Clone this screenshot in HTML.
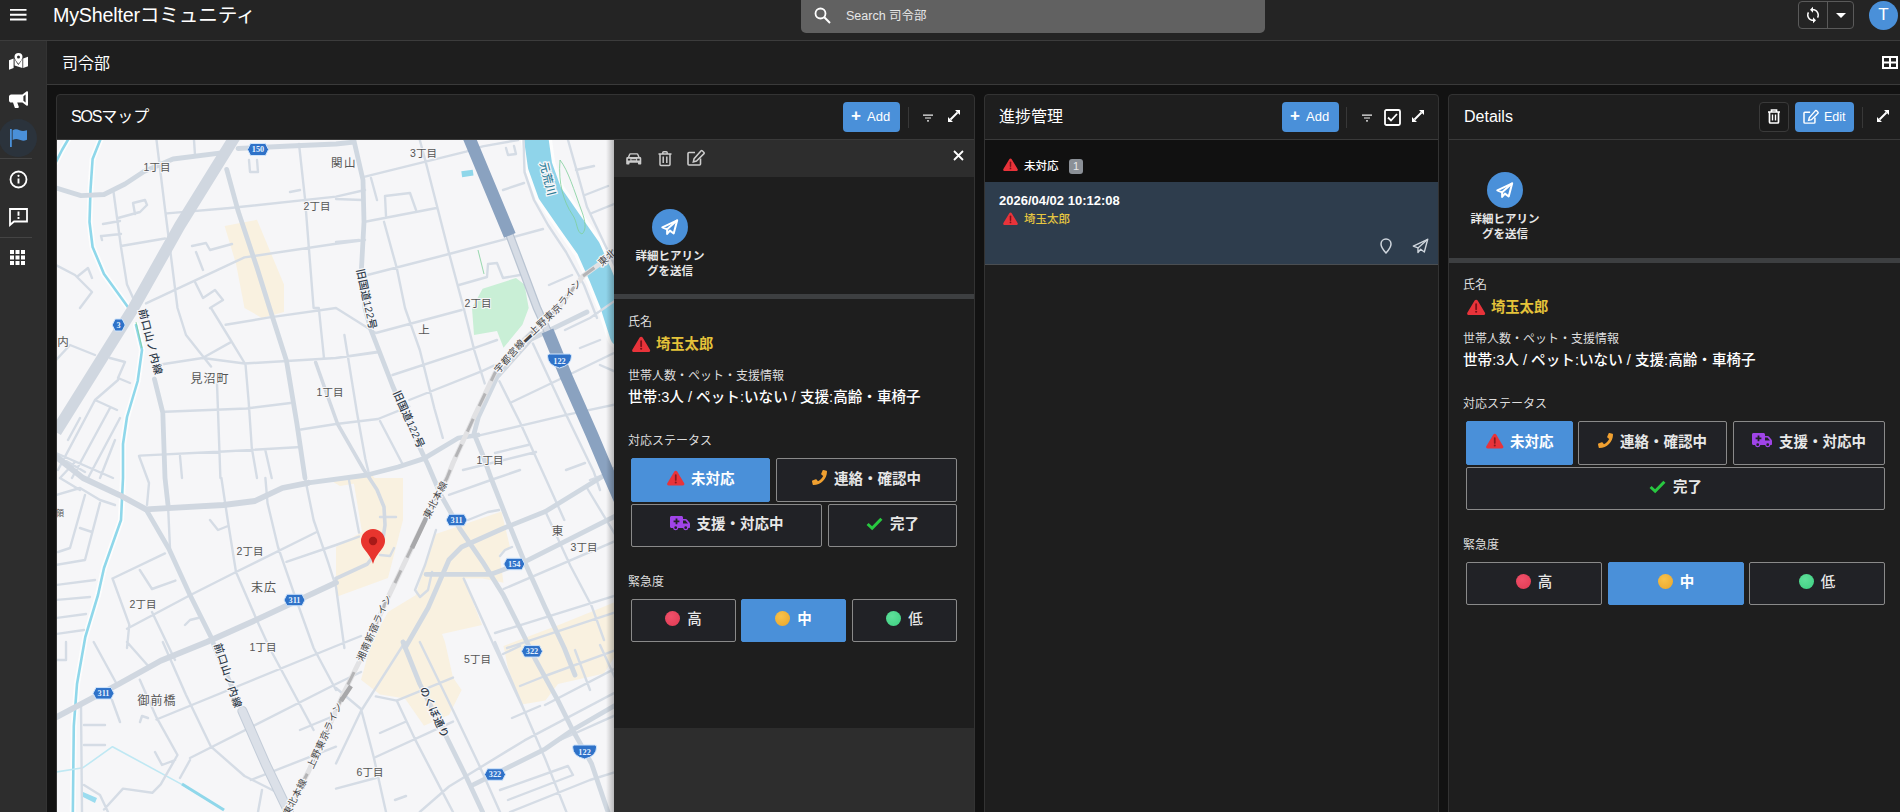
<!DOCTYPE html>
<html lang="ja">
<head>
<meta charset="utf-8">
<title>MyShelterコミュニティ - 司令部</title>
<style>
*{box-sizing:border-box;margin:0;padding:0}
html,body{width:1900px;height:812px;overflow:hidden;background:#121212}
body{font-family:"Liberation Sans","Noto Sans CJK JP",sans-serif;color:#fff;position:relative;font-size:13px}
.abs{position:absolute}
svg{display:block;overflow:visible}
/* top bar */
#topbar{position:absolute;left:0;top:0;width:1900px;height:41px;background:#242424;border-bottom:1px solid #3c3c3c}
#brand{position:absolute;left:53px;top:0;height:30px;line-height:30px;font-size:19.7px;color:#fff;white-space:nowrap;letter-spacing:-0.2px}
#search{position:absolute;left:801px;top:-4px;width:464px;height:36.700px;background:#616161;border-radius:5px}
#search span{position:absolute;left:45px;top:4px;height:32px;line-height:32px;font-size:12.5px;color:#e6e6e6;white-space:nowrap}
#syncgrp{position:absolute;left:1798px;top:1px;width:56px;height:28px;border:1px solid #5a5a5a;border-radius:4px}
#syncgrp i{position:absolute;left:28px;top:0;width:1px;height:26px;background:#5a5a5a}
#avatar{position:absolute;left:1869px;top:0.500px;width:29px;height:29px;border-radius:50%;background:#4a90d9;color:#fff;font-size:17px;line-height:28px;text-align:center}
/* sidebar */
#sidebar{position:absolute;left:0;top:41px;width:47px;height:771px;background:#2d2d2d;border-right:1px solid #333}
#sidebar .sep{position:absolute;left:0;width:32px;height:1px;background:#444}
#sidebar .active{position:absolute;left:-1px;top:78px;width:38px;height:38px;border-radius:50%;background:#2b333c}
/* subheader */
#subhead{position:absolute;left:47px;top:41px;width:1853px;height:44px;background:#1e1e1e;border-bottom:1px solid #3a3a3a}
#subhead h1{position:absolute;left:15px;top:0;height:43px;line-height:45px;font-size:16px;font-weight:400;color:#fff}
/* panels */
.panel{position:absolute;top:94px;height:730px;background:#1e1e1e;border:1px solid #333;border-radius:4px}
.phead{position:absolute;left:0;top:0;right:0;height:45px;border-bottom:1px solid #3a3a3a}
.ptitle{position:absolute;left:14px;top:0;height:44px;line-height:43px;font-size:16px;color:#fff;white-space:nowrap}
.btn{position:absolute;top:7px;height:30px;border-radius:4px;background:#4a90d9;color:#fff;font-size:13px;line-height:30px;white-space:nowrap}
.vdiv{position:absolute;top:12px;width:1px;height:21px;background:#383838}
.lbl{position:absolute;font-size:12px;color:#ddd;white-space:nowrap;line-height:16px}
.val{position:absolute;font-size:14.6px;color:#fff;white-space:nowrap;line-height:22px;font-weight:500}
.name{position:absolute;font-size:14.3px;font-weight:700;color:#e5c33a;white-space:nowrap;line-height:20px}
.sbtn{position:absolute;border-radius:2px;border:1px solid #8a8a8a;background:#212226;color:#e8e8e8;font-size:14.5px;font-weight:700;white-space:nowrap;text-align:center}
.sbtn.on{background:#4a90d9;border-color:#4a90d9;color:#fff}
.sbtn .in{display:inline-flex;align-items:center;height:100%;gap:7px;padding-bottom:5.500px}.sbtn .in svg,.sbtn .in .dot{position:relative;top:0.600px}
.dot{display:inline-block;width:15px;height:15px;border-radius:50%}
.send{position:absolute;width:36px;height:36px;border-radius:50%;background:#4a90d9}
.sendlbl{position:absolute;font-size:11.5px;font-weight:700;color:#e8e8e8;text-align:center;line-height:15px;width:80px}
</style>
</head>
<body>

<!-- ======= TOP BAR ======= -->
<div id="topbar">
  <svg class="abs" style="left:9.500px;top:8px" width="16.500" height="14" viewBox="0 0 16.500 14"><path d="M0 1.900h16.500M0 6.700h16.500M0 11.500h16.500" stroke="#fff" stroke-width="1.900"/></svg>
  <div id="brand">MyShelterコミュニティ</div>
  <div id="search">
    <svg class="abs" style="left:13px;top:11px" width="17" height="17" viewBox="0 0 17 17"><circle cx="6.5" cy="6.5" r="5" fill="none" stroke="#fff" stroke-width="1.8"/><path d="M10.3 10.3L16 16" stroke="#fff" stroke-width="2"/></svg>
    <span>Search 司令部</span>
  </div>
  <div id="syncgrp">
    <svg class="abs" style="left:5px;top:4px" width="18" height="18" viewBox="0 0 24 24"><path fill="#fff" d="M12 4V1L8 5l4 4V6c3.31 0 6 2.69 6 6 0 1.01-.25 1.97-.7 2.8l1.46 1.46C19.54 15.03 20 13.57 20 12c0-4.42-3.58-8-8-8zm0 14c-3.31 0-6-2.69-6-6 0-1.01.25-1.97.7-2.8L5.240 7.740C4.460 8.970 4 10.430 4 12c0 4.420 3.580 8 8 8v3l4-4-4-4v3z"/></svg>
    <i></i>
    <svg class="abs" style="left:37px;top:11px" width="10" height="5" viewBox="0 0 10 5"><path d="M0 0h10L5 5z" fill="#fff"/></svg>
  </div>
  <div id="avatar">T</div>
</div>

<!-- ======= SIDEBAR ======= -->
<div id="sidebar">
  <div class="active"></div>
  <div class="sep" style="top:117px"></div>
  <div class="sep" style="top:196px"></div>
  
  <svg class="abs" style="left:9px;top:12px" width="19" height="17" viewBox="0 0 19 17"><path fill="#fff" d="M0 7.300L4.600 5.500V15L0 16.800zM14.200 5.600L19 3.800V13.200L14.200 15zM5.600 5.600C6.300 8 8 10.200 9.400 12c1.400-1.800 3.100-4 3.800-6.400l.2-.1V15l-7.800-2.400z"/><path fill="#fff" fill-rule="evenodd" d="M9.500 0a4 4 0 0 1 4 4c0 2-2.400 4.800-4 6.800C7.900 8.800 5.500 6 5.500 4a4 4 0 0 1 4-4zm0 2.500a1.500 1.500 0 1 0 0 3 1.500 1.500 0 0 0 0-3z"/></svg>
  <svg class="abs" style="left:9px;top:50px" width="19" height="17" viewBox="0 0 19 17"><path fill="#fff" d="M19 1.200v12.600c0 .8-.9 1.300-1.600.8L13.400 11.600H8.200l1.600 4.200c.2.600-.2 1.200-.9 1.200H6.600c-.4 0-.8-.2-.9-.6L4 11.600H2.200C1 11.600 0 10.600 0 9.400V5.600C0 4.400 1 3.400 2.200 3.400h11.200L17.400.4c.7-.5 1.600 0 1.600.8zM16.600 3.600L14.400 5.300v4.400l2.200 1.700z"/></svg>
  <svg class="abs" style="left:10px;top:88px" width="17" height="18" viewBox="0 0 17 18"><path fill="#4a90d9" d="M0 0h1.800v18H0zM2.600 1.200C5.500-.3 7.500.4 9.500 1.200s4 1.200 7.500 0v9.600c-3.500 1.400-5.500.8-7.500 0s-4-1.300-6.900.2z"/></svg>
  <svg class="abs" style="left:9px;top:129px" width="19" height="19" viewBox="0 0 19 19"><circle cx="9.500" cy="9.500" r="8" fill="none" stroke="#fff" stroke-width="1.800"/><path d="M9.500 8.500v5" stroke="#fff" stroke-width="1.900"/><circle cx="9.500" cy="5.800" r="1.100" fill="#fff"/></svg>
  <svg class="abs" style="left:9px;top:167px" width="19" height="18" viewBox="0 0 19 18"><path d="M1 1h17v12.500H5L1 17z" fill="none" stroke="#fff" stroke-width="1.800" stroke-linejoin="miter"/><path d="M9.500 3.600v4.200M9.500 9v2" stroke="#fff" stroke-width="1.900"/></svg>
  <svg class="abs" style="left:10px;top:209px" width="15" height="15" viewBox="0 0 15 15"><path fill="#fff" d="M0 0h4v4H0zM5.500 0h4v4h-4zM11 0h4v4h-4zM0 5.500h4v4H0zM5.500 5.500h4v4h-4zM11 5.500h4v4h-4zM0 11h4v4H0zM5.500 11h4v4h-4zM11 11h4v4h-4z"/></svg>

</div>

<!-- ======= SUB HEADER ======= -->
<div id="subhead">
  <h1>司令部</h1>
  <svg class="abs" style="left:1835px;top:15px" width="16" height="13" viewBox="0 0 16 13"><path d="M1 1h14v11H1zM8 1v11M1 6.500h14" fill="none" stroke="#fff" stroke-width="2"/></svg>
</div>

<!-- ======= PANEL 1 : SOS MAP ======= -->
<div class="panel" id="p1" style="left:56px;width:919px">
  <div class="phead">
    <div class="ptitle"><span style="letter-spacing:-1.200px">SOS</span>マップ</div>
    <div class="btn" style="left:786px;width:57px"><span style="position:absolute;left:8px;top:-1px;font-size:17px;font-weight:700">+</span><span style="position:absolute;left:24px">Add</span></div>
    <div class="vdiv" style="left:851px"></div>
    <svg class="abs" style="left:866px;top:19px" width="10" height="8" viewBox="0 0 10 8"><path d="M0 1.200h10M2 4h6M4 6.800h2" stroke="#eee" stroke-width="1.200"/></svg><svg class="abs" style="left:891px;top:15px" width="12" height="12" viewBox="0 0 12 12"><path d="M2.500 9.500L9.500 2.500" stroke="#fff" stroke-width="2"/><path d="M7 0h5v5zM0 7v5h5z" fill="#fff"/></svg>
  </div>
  <div id="map" class="abs" style="left:0;top:45px;width:557px;height:672px;background:#f5f5f7;overflow:hidden">
    <svg class="abs" style="left:0;top:0" width="557" height="672" viewBox="57 140 557 672" font-family="Liberation Sans,Noto Sans CJK JP,sans-serif">
<rect x="57" y="140" width="557" height="672" fill="#f6f6f8"/>
<path d="M224.6 226 L257 219.7 L284 284.6 L284 312 L262 318 L244.5 308 L236 263.7Z" fill="#f9f1e0"/>
<path d="M353 478 L403 478 L403 520 L388 578 L336 597 L336 547 L362 532Z" fill="#f9f1e0"/>
<path d="M434.4 534.5 L501.4 511.5 L510 547 L499.4 553.4 L503.5 582.7 L482.6 578.5 L463.7 578.5 L482 625 L442 634 L445 642 L453 677.6 L461.6 690 L449 715 L424 725.8 L405 698.5 L380 694.4 L361 679.7 L371.6 642 L388 612 L415.6 595.3Z" fill="#f9f1e0"/>
<path d="M560 624.6 L616 601.6 L616 654.6 L604 673.4 L558 684 L545.4 700.6 L520.3 704.8 L507.7 667 L503.5 646Z" fill="#f9f1e0"/>
<path d="M330 480 L370 472 L376 480 L340 486Z" fill="#f9f1e0"/>
<path d="M482.6 288.8 L516 278 L524.5 284.6 L528.7 308 L522.4 324.8 L503.5 347.8 L497 331 L474 335 L472 308Z" fill="#c9efd6"/>
<path d="M535.5 133 L536.5 140.8 L540 165.6 L549.8 193 L569 220.8 L588.4 248.3 L600.8 276 L611.9 303.5 L622 335" fill="none" stroke="#fdfdfd" stroke-width="31" stroke-linecap="round" stroke-linejoin="round" />
<path d="M535.5 133 L536.5 140.8 L540 165.6 L549.8 193 L569 220.8 L588.4 248.3 L600.8 276 L611.9 303.5 L622 335" fill="none" stroke="#8fd4ea" stroke-width="24.5" stroke-linecap="round" stroke-linejoin="round" />
<path d="M101 138 L92.6 159 L90.5 190 L89.5 222 L92.6 247 L104 274 L125 303 L130 310 M136 325 L142 350 L137.7 381 L127 417 L123 444 L123 478 L121 520 L104 568 L98 595 L85.3 637 L77 684 L73.8 725.8 L72.8 815 M56 162 L62 150 L69 138" fill="none" stroke="#fdfdfd" stroke-width="6" stroke-linecap="round" stroke-linejoin="round" />
<path d="M101 138 L92.6 159 L90.5 190 L89.5 222 L92.6 247 L104 274 L125 303 L130 310 M136 325 L142 350 L137.7 381 L127 417 L123 444 L123 478 L121 520 L104 568 L98 595 L85.3 637 L77 684 L73.8 725.8 L72.8 815 M56 162 L62 150 L69 138" fill="none" stroke="#8fd7ea" stroke-width="2.6" stroke-linecap="round" stroke-linejoin="round" />
<path d="M56 772 L83 767.7 L112.5 746.7 L181.7 784.4 L223.5 809.5" fill="none" stroke="#bfe8f3" stroke-width="1.6" stroke-linecap="round" stroke-linejoin="round" />
<path d="M182 784l42 26" stroke="#8fd7ea" stroke-width="3" fill="none"/>
<rect x="461.600" y="170.500" width="11.500" height="6" fill="#8fd7ea" transform="rotate(-8 467 173)"/>
<path d="M83 792l14 6-2 5-14-7z" fill="#9bdcef"/>
<path d="M560 160c8 10 14 30 22 52c3 8 5 18 0 22c-6-2-4-12-10-20c-8-12-14-30-12-54z M136 322l6 26 M478 250l6 24" fill="none" stroke="#7fcf9a" stroke-width="0.800"/>
<path d="M139 456 L149 483 L147 505 M56 453 L113 478 M75 462 L60 478 M68 440 L80 418 M156.5 140 L165 209 L177.5 308 L186 335 L211 366.6 M113.6 192.5 L121 247 L127 284.6 L134 300 M121 246 L165 238.5 M167 213.4 L230 208 L336 196.6 L365 190 M146 303.4 L244.5 257.4 L336 243.8 L365 240 M299 144 L305 198.7 L313.6 308 L318.8 308 L324 358 M194 140 L195 155 M118 218 L140 212 L147 205 L145 200 L133 203 L135 214 M103 224 L120 221 M102 236 L121 234 M101 236 L102 240 M56 265 L75 275 L92 292 L80 308 M78 276 L88 268 L92 278 M192 246 L206 243 L210 250 L232 244 M196 252 L203 270 M195 282 L203 298 L215 290 L223 300 L210 308 M249 160 L250 172 L258 172 L257 160 M290 192 L300 190 M365 176.7 L466 151.6 L482.6 146.4 L518 140 M419.8 140 L426 163 L449 253 L463.7 308 L474.2 350 L484.7 383.4 M365 221.8 L436.5 208 M384 221.8 L396.7 267.8 L405 308 L419.8 350 L434.4 408.5 L442.8 437.8 M336 242 L359 240 M367.4 275 L449 254 L503.5 239.6 L543 229 M459 285 L487 277 L488 264 L497 263 L503 278 L520 275 M386 216 L385 196 L410 193 L416 210 M371 178 L377 200 M336 199 L362 200 M523.5 140 L524.5 172 L534 200 L548 225 L566 252 L584 285 L597 318 M568 140 L587 207 L616 268 M503 190 L524 183 M506 148 L508 155 L516 154 L514 146 M576 170 L594 166 M585 195 L608 186 M592 213 L614 204 M549 285 L572 275 M160.7 364.5 L202.6 358 L244.5 363.5 L336 358 L380 352 M225.6 324.8 L269.6 317.4 L336 308 L375.8 333 L461.6 310 M202.6 358 L230 342.6 M211 308 L230 339 L245.5 364.5 L248.7 402 L251.8 448 L257 478 M165 411.7 L246.6 408.5 L290.6 403 M139.8 455.6 L223.5 451.5 L301 447 M217 383.4 L220.4 478 M301 429.5 L336 424 L378 419 L409.3 406.4 M265.4 450.4 L271.7 478 M180 456 L182 478 M56 360 L70 345 L95 355 M110 358 L125 362 L118 378 L130 383 M58 470 L95 400 L118 380 M72 478 L110 408 M88 478 L120 418 M100 478 L115 440 M95 400 L117 410 M56 455 L85 472 M392.5 375 L472 348.8 L497 340 M409.3 400 L482.6 370.8 L495 365 M344.4 335 L357 412.7 L365.3 458.8 L370 478 M336 358 L376 352 M380 421 L403 465 M499.4 381.3 L520.3 423 L545.4 478 L564.3 520 M532.9 343.6 L562.2 406.4 L593.6 471.4 L600 490 M512 402 L556 381 L616 352 M478.4 435.7 L566.4 414.8 L616 404.3 M495 453 L528 445 M463 470 L536 452 M565 330 L590 318 L616 300 M580 348 L600 340 M600 365 L616 372 M566 470 L585 463 M221.4 478 L227.7 520 L236 572 L257 620.4 L269.6 648 L313.6 730 M265.4 478 L267.5 503 L278 547 L294.7 595.3 L313.6 648 L336 690 M305 478 L313.6 520 L328 561.8 L336 587 L344.4 648 M112.5 578.5 L165 553.4 M127 628.8 L190 595.3 L236 572 L315.7 532.5 M112.5 578.5 L129.3 624.6 L127 648 M139.8 570 L152 589 L175.4 580.6 M286.4 561.8 L336 545 L359 536.6 M168 505 L170 548 M210 520 L218 530 L228 526 M185 625 L190 620 L198 618 M152 612 L175 660 M56 495 L80 488 L100 500 L115 505 M60 478 L80 490 M85 495 L70 548 L58 552 M100 503 L85 560 L56 565 M80 528 L92 532 M56 585 L95 580 M56 600 L90 597 M56 618 L86 614 M56 634 L84 630 M348.6 478 L359 532.5 M336 545 L359 536.6 M503.5 589 L616 540.8 M463.7 578.5 L495 648 L524.5 711 M495 633 L616 595.3 M545.4 511.5 L570.5 566 L591.5 605.7 L604 640 M587 488 L616 536 M449 494.8 L491 480 L520 470 M468 520 L488 512 L499 510 M507 648 L616 612 M500 556 L505 550 L512 547 M380 517 L396 517 M380 555 L390 556 L394 548 M436 530 L425 565 L415 590 L420 597 L428 590 L432 572 M590 480 L616 470 M162.8 642 L185.8 694.4 L211 746.7 L244.5 776 L273.8 790.7 M93.7 642 L116.7 684 M127 642 L150 668 M139.8 679.7 L156.5 717.4 L177.5 755 L160.7 784.4 L152.3 792.8 L123 788.6 L104 809.5 M156.5 719.5 L336 646 L361 636 M190 758 L336 684 L361 672 M250.8 780 L336 746.7 M140 722 L142 716 L148 718 M81 705 L82 812 M112 700 L120 722 M84 725 L105 725 M84 745 L105 745 M155 752 L162 765 L175 760 M190 760 L180 778 M262 790 L258 812 M56 660 L66 660 L66 642 M84 785 L100 795 L108 812 M300 730 L336 715 M419.8 642 L453.3 711 L478.4 763.5 L500 812 M495 642 L524.5 711 L545.4 759.3 L566.4 812 M336 688 L361 709 L373.7 757 L386 812 M405 642 L361 711 L336 763.5 M375.8 696.4 L396.7 700.6 L453 677.6 M396.7 700.6 L415.6 740.4 L440.7 788.6 L453 812 M375.8 757 L453 721.6 M419.8 812 L449 786.5 L524.5 740.4 L616 692 M336 788.6 L375.8 778 M503 654 L520 646 M520 686 L545 676 L616 650 M545 705 L616 668 M512 718 L540 706 M500 790 L568 766 L573 775 L508 800 M510 812 L590 780 L616 772 M560 740 L616 715 M575 650 L590 690 M600 645 L616 680 M395 800 L406 796 M380 733 L405 722" fill="none" stroke="#d5dce5" stroke-width="2.4" stroke-linecap="round" stroke-linejoin="round" />
<path d="M336 578.5 L367.4 564 L382 545 L385 525 L384 507 L377 489.7 L363.4 469 L337.6 424 L329 400 L315.7 362.5" fill="none" stroke="#d2d9e2" stroke-width="3.6" stroke-linecap="round" stroke-linejoin="round" />
<path d="M238 148.5 L290 146 L336 144 L354 142 M308.3 482.8 L367 475 L398 467 L423.8 458.6 L458.3 438 L478 435 M56 188 L81 195.6 L104 194.5 L125 184 L144 171.5 L173 159 L223.5 152.7 M226.7 169.4 L238.2 211.3 L257 267.8 L269.6 308 L286.4 360.4 L296.8 423 L305 478 M353.8 140 L363 180 L364 222 L361.5 268 L365 308 L370.6 329 L392.5 385.5 L409.3 425.3 L428 465 L440.7 494.8 L459.6 528.3 L482.6 561.8 L503.5 595.3 L524.5 637 L535 658.8 L558 700.6 L572.6 730 L591.5 763.5 L608 812 M154.4 379 L162.8 412.7 L165 478 L168 505 M146 509.4 L169 549 L190 595 L211 637 L215 648 L242.4 711 M587 312 L530.8 339.4 L497 377 L478.4 417 L474 433.7 L482.6 454.6 L491 478 L509.8 526 L524.5 561.8 L545.4 608 L564.3 648 L575 675 M449 559.7 L461.6 547 L503.5 528.3 L545.4 511.5 L600 478 L616 468 M449 559.7 L428 608 L405 648 L403 642 M403 642 L419.8 684 L445 734 L465.8 776 L482.6 812 M426 574.3 L491 574.3 L524.5 561.8 L616 515.7 M474 784.4 L507.7 767.7 L545.4 748.8 L572.6 730 L616 704.8" fill="none" stroke="#d0d8e1" stroke-width="4.8" stroke-linecap="round" stroke-linejoin="round" />
<path d="M50 452 L83 478 L119 494.8 L146 509.4 L223.5 505 L255 501 L282.4 488 L308.3 482.8 M56 717.4 L118.8 684 L160.7 660.8 L206.8 642 L255 620.4 L336 582.7" fill="none" stroke="#d0d7e0" stroke-width="5.8" stroke-linecap="round" stroke-linejoin="round" />
<path d="M236 135 L179.6 226 L133.5 308 L56 432" fill="none" stroke="#d0d7e0" stroke-width="11.5" stroke-linecap="butt" stroke-linejoin="round" />
<path d="M509.8 235.4 L537 308 L547.5 331" fill="none" stroke="#b9c4d2" stroke-width="8.5" stroke-linecap="round" stroke-linejoin="round" />
<path d="M509.8 235.4 L537 308 L547.5 331" fill="none" stroke="#d6dce5" stroke-width="6" stroke-linecap="round" stroke-linejoin="round" />
<path d="M242.4 711 L265.4 763.5 L284.3 803 L290 815" fill="none" stroke="#c3ccd8" stroke-width="10" stroke-linecap="round" stroke-linejoin="round" />
<path d="M242.4 711 L265.4 763.5 L284.3 803 L290 815" fill="none" stroke="#dbe0e8" stroke-width="8" stroke-linecap="round" stroke-linejoin="round" />
<path d="M468 135 L509.8 235.4 M547.5 331 L566.4 377 L591.5 433.7 L610.3 478 L620 500" fill="none" stroke="#8aa2c0" stroke-width="12.5" stroke-linecap="butt" stroke-linejoin="round" />
<path d="M616 250 L600 263.7 L583 276 L558 308 L524.5 339.4 L495 373 L474 417 L453 463 L447 478 L426 517.8 L405 561.8 L386 601.6 L365.3 648 L359.6 661 L344.7 691 L326 733 L308.7 771 L285 817" fill="none" stroke="#e2e2e4" stroke-width="5" stroke-linecap="round" stroke-linejoin="round" />
<path d="M616 250 L600 263.7 L583 276 L558 308 L524.5 339.4 L495 373 L474 417 L453 463 L447 478 L426 517.8 L405 561.8 L386 601.6 L365.3 648 L359.6 661 L344.7 691 L326 733 L308.7 771 L285 817" fill="none" stroke="#b4b4b6" stroke-width="3" stroke-linecap="butt" stroke-linejoin="round" stroke-dasharray="14 14"/>
<path d="M430 510L412 548M351 686L341 701" stroke="#a8a8aa" stroke-width="4.500" fill="none"/>
<path d="M250.5 143.5H265.5L268.5 149.5L265.5 155.5H250.5L247.5 149.5Z" fill="#2f72c8" stroke="#cfe4fb" stroke-width="1"/><text x="258" y="152.4" text-anchor="middle" font-size="8.3" font-weight="700" fill="#e4f0ff" font-family="Liberation Serif,serif">150</text>
<path d="M115.2 319H122.2L125.2 325L122.2 331H115.2L112.2 325Z" fill="#2f72c8" stroke="#cfe4fb" stroke-width="1"/><text x="118.7" y="327.9" text-anchor="middle" font-size="8.3" font-weight="700" fill="#e4f0ff" font-family="Liberation Serif,serif">3</text>
<path d="M449.1 514.25H464.1L467.1 520L464.1 525.75H449.1L446.1 520Z" fill="#2f72c8" stroke="#cfe4fb" stroke-width="1"/><text x="456.6" y="522.9" text-anchor="middle" font-size="8.3" font-weight="700" fill="#e4f0ff" font-family="Liberation Serif,serif">311</text>
<path d="M506.8 558.25H521.8L524.8 564L521.8 569.75H506.8L503.8 564Z" fill="#2f72c8" stroke="#cfe4fb" stroke-width="1"/><text x="514.3" y="566.9" text-anchor="middle" font-size="8.3" font-weight="700" fill="#e4f0ff" font-family="Liberation Serif,serif">154</text>
<path d="M287 594.25H302L305 600L302 605.75H287L284 600Z" fill="#2f72c8" stroke="#cfe4fb" stroke-width="1"/><text x="294.5" y="602.9" text-anchor="middle" font-size="8.3" font-weight="700" fill="#e4f0ff" font-family="Liberation Serif,serif">311</text>
<path d="M96 687.55H111L114 693.3L111 699.05H96L93 693.3Z" fill="#2f72c8" stroke="#cfe4fb" stroke-width="1"/><text x="103.5" y="696.2" text-anchor="middle" font-size="8.3" font-weight="700" fill="#e4f0ff" font-family="Liberation Serif,serif">311</text>
<path d="M524.5 645.55H539.5L542.5 651.3L539.5 657.05H524.5L521.5 651.3Z" fill="#2f72c8" stroke="#cfe4fb" stroke-width="1"/><text x="532" y="654.2" text-anchor="middle" font-size="8.3" font-weight="700" fill="#e4f0ff" font-family="Liberation Serif,serif">322</text>
<path d="M487.5 768.75H502.5L505.5 774.5L502.5 780.25H487.5L484.5 774.5Z" fill="#2f72c8" stroke="#cfe4fb" stroke-width="1"/><text x="495" y="777.4" text-anchor="middle" font-size="8.3" font-weight="700" fill="#e4f0ff" font-family="Liberation Serif,serif">322</text>
<path d="M547.5 356Q547.5 354 549.5 354H569.5Q571.5 354 571.5 356Q571.5 365.2 559.5 368Q547.5 365.2 547.5 356Z" fill="#2f72c8" stroke="#cfe4fb" stroke-width="1"/><text x="559.5" y="363.6" text-anchor="middle" font-size="8.3" font-weight="700" fill="#e4f0ff" font-family="Liberation Serif,serif">122</text>
<path d="M572.6 747Q572.6 745 574.6 745H594.6Q596.6 745 596.6 747Q596.6 756.2 584.6 759Q572.6 756.2 572.6 747Z" fill="#2f72c8" stroke="#cfe4fb" stroke-width="1"/><text x="584.6" y="754.6" text-anchor="middle" font-size="8.3" font-weight="700" fill="#e4f0ff" font-family="Liberation Serif,serif">122</text>
<text x="157" y="171" text-anchor="middle" font-size="10.5" fill="#555" font-weight="400" letter-spacing="0" stroke="#f6f6f8" stroke-width="2" paint-order="stroke">1丁目</text>
<text x="344" y="167" text-anchor="middle" font-size="11.5" fill="#555" font-weight="400" letter-spacing="1.5" stroke="#f6f6f8" stroke-width="2" paint-order="stroke">関山</text>
<text x="317" y="210" text-anchor="middle" font-size="10.5" fill="#555" font-weight="400" letter-spacing="0" stroke="#f6f6f8" stroke-width="2" paint-order="stroke">2丁目</text>
<text x="423.5" y="157" text-anchor="middle" font-size="10.5" fill="#555" font-weight="400" letter-spacing="0" stroke="#f6f6f8" stroke-width="2" paint-order="stroke">3丁目</text>
<text x="478" y="307" text-anchor="middle" font-size="10.5" fill="#555" font-weight="400" letter-spacing="0" stroke="#f6f6f8" stroke-width="2" paint-order="stroke">2丁目</text>
<text x="424" y="334" text-anchor="middle" font-size="11.5" fill="#555" font-weight="400" letter-spacing="0" stroke="#f6f6f8" stroke-width="2" paint-order="stroke">上</text>
<text x="210" y="383" text-anchor="middle" font-size="12" fill="#555" font-weight="400" letter-spacing="1" stroke="#f6f6f8" stroke-width="2" paint-order="stroke">見沼町</text>
<text x="63" y="346" text-anchor="middle" font-size="11.5" fill="#555" font-weight="400" letter-spacing="0" stroke="#f6f6f8" stroke-width="2" paint-order="stroke">内</text>
<text x="330" y="396" text-anchor="middle" font-size="10.5" fill="#555" font-weight="400" letter-spacing="0" stroke="#f6f6f8" stroke-width="2" paint-order="stroke">1丁目</text>
<text x="490" y="464" text-anchor="middle" font-size="10.5" fill="#555" font-weight="400" letter-spacing="0" stroke="#f6f6f8" stroke-width="2" paint-order="stroke">1丁目</text>
<text x="250" y="555" text-anchor="middle" font-size="10.5" fill="#555" font-weight="400" letter-spacing="0" stroke="#f6f6f8" stroke-width="2" paint-order="stroke">2丁目</text>
<text x="143" y="608" text-anchor="middle" font-size="10.5" fill="#555" font-weight="400" letter-spacing="0" stroke="#f6f6f8" stroke-width="2" paint-order="stroke">2丁目</text>
<text x="264" y="592" text-anchor="middle" font-size="12" fill="#555" font-weight="400" letter-spacing="1" stroke="#f6f6f8" stroke-width="2" paint-order="stroke">末広</text>
<text x="557.5" y="535" text-anchor="middle" font-size="11.5" fill="#555" font-weight="400" letter-spacing="0" stroke="#f6f6f8" stroke-width="2" paint-order="stroke">東</text>
<text x="584" y="551" text-anchor="middle" font-size="10.5" fill="#555" font-weight="400" letter-spacing="0" stroke="#f6f6f8" stroke-width="2" paint-order="stroke">3丁目</text>
<text x="263" y="651" text-anchor="middle" font-size="10.5" fill="#555" font-weight="400" letter-spacing="0" stroke="#f6f6f8" stroke-width="2" paint-order="stroke">1丁目</text>
<text x="157" y="705" text-anchor="middle" font-size="12" fill="#555" font-weight="400" letter-spacing="1" stroke="#f6f6f8" stroke-width="2" paint-order="stroke">御前橋</text>
<text x="477.5" y="662.5" text-anchor="middle" font-size="10.5" fill="#555" font-weight="400" letter-spacing="0" stroke="#f6f6f8" stroke-width="2" paint-order="stroke">5丁目</text>
<text x="370" y="775.5" text-anchor="middle" font-size="10.5" fill="#555" font-weight="400" letter-spacing="0" stroke="#f6f6f8" stroke-width="2" paint-order="stroke">6丁目</text>
<text x="60" y="516" text-anchor="middle" font-size="8" fill="#555" font-weight="400" letter-spacing="0" stroke="#f6f6f8" stroke-width="2" paint-order="stroke">領</text>
<text x="61" y="341" text-anchor="middle" font-size="8" fill="#555" font-weight="400" letter-spacing="0" stroke="#f6f6f8" stroke-width="2" paint-order="stroke"></text>
<text transform="translate(147 343) rotate(76)" text-anchor="middle" font-size="10.5" fill="#2e3a4a" font-weight="500" letter-spacing="0.8" stroke="#f6f6f8" stroke-width="2.500" paint-order="stroke">前口山ノ内線</text>
<text transform="translate(544 180) rotate(76)" text-anchor="middle" font-size="11" fill="#2f7f9a" font-weight="500" letter-spacing="0.5" stroke="#f6f6f8" stroke-width="2.500" paint-order="stroke">元荒川</text>
<text transform="translate(363 300) rotate(78)" text-anchor="middle" font-size="10.5" fill="#2e3a4a" font-weight="500" letter-spacing="0.3" stroke="#f6f6f8" stroke-width="2.500" paint-order="stroke">旧国道122号</text>
<text transform="translate(405.5 421) rotate(66)" text-anchor="middle" font-size="10.5" fill="#2e3a4a" font-weight="500" letter-spacing="0.3" stroke="#f6f6f8" stroke-width="2.500" paint-order="stroke">旧国道122号</text>
<path id="railrev" d="M285 817 L308.7 771 L326 733 L344.7 691 L359.6 661 L365.3 648 L386 601.6 L405 561.8 L426 517.8 L447 478 L453 463 L474 417 L495 373 L524.5 339.4 L558 308 L583 276 L600 263.7 L616 250" fill="none"/>
<text font-size="9.6" fill="#444" letter-spacing="0.7" stroke="#f6f6f8" stroke-width="2.400" paint-order="stroke" text-anchor="middle" dy="3.200"><textPath href="#railrev" startOffset="555.0">宇都宮線▬上野東京ライン</textPath></text>
<text font-size="9.6" fill="#444" letter-spacing="0.5" stroke="#f6f6f8" stroke-width="2.400" paint-order="stroke" text-anchor="middle" dy="3.200"><textPath href="#railrev" startOffset="653.2">東北</textPath></text>
<text font-size="9.6" fill="#444" letter-spacing="0.5" stroke="#f6f6f8" stroke-width="2.400" paint-order="stroke" text-anchor="middle" dy="3.200"><textPath href="#railrev" startOffset="351.2">東北本線</textPath></text>
<text font-size="9.6" fill="#444" letter-spacing="0.6" stroke="#f6f6f8" stroke-width="2.400" paint-order="stroke" text-anchor="middle" dy="3.200"><textPath href="#railrev" startOffset="209.0">湘南新宿ライン</textPath></text>
<text font-size="9.6" fill="#444" letter-spacing="0.6" stroke="#f6f6f8" stroke-width="2.400" paint-order="stroke" text-anchor="middle" dy="3.200"><textPath href="#railrev" startOffset="90.8">上野東京ライン</textPath></text>
<text font-size="9.6" fill="#444" letter-spacing="0.5" stroke="#f6f6f8" stroke-width="2.400" paint-order="stroke" text-anchor="middle" dy="3.200"><textPath href="#railrev" startOffset="22.1">東北本線</textPath></text>
<text transform="translate(224.5 677) rotate(72)" text-anchor="middle" font-size="10.5" fill="#2e3a4a" font-weight="500" letter-spacing="0.8" stroke="#f6f6f8" stroke-width="2.500" paint-order="stroke">前口山ノ内線</text>
<text transform="translate(431 714) rotate(65)" text-anchor="middle" font-size="10.5" fill="#2e3a4a" font-weight="500" letter-spacing="0.5" stroke="#f6f6f8" stroke-width="2.500" paint-order="stroke">のくぼ通り</text>
<path d="M373 564c-1.500-6-5-10-8.500-14.500c-2.500-3.200-3.500-6-3.500-8.500a12 12 0 0 1 24 0c0 2.500-1 5.300-3.500 8.500c-3.500 4.500-7 8.500-8.500 14.500z" fill="#e8352e"/><circle cx="373" cy="541" r="4.200" fill="#a81a18"/>
<defs><linearGradient id="edg" x1="0" x2="1"><stop offset="0" stop-color="#000" stop-opacity="0"/><stop offset="1" stop-color="#000" stop-opacity="0.25"/></linearGradient></defs><rect x="606" y="140" width="8" height="672" fill="url(#edg)"/>
</svg>
  </div>
  <div id="side" class="abs" style="left:557px;top:45px;width:360px;height:672px;background:#2d2d2d">
    <div class="abs" style="left:0;top:0;width:360px;height:37px;background:#2d2d2d"></div>
    <div class="abs" style="left:0;top:37px;width:360px;height:117px;background:#1e1e1e"></div>
    <div class="abs" style="left:0;top:154px;width:360px;height:5px;background:#3d3f41"></div>
    <div class="abs" style="left:0;top:159px;width:360px;height:429px;background:#1e1e1e"></div>
    <svg class="abs" style="left:12px;top:13px" width="15.500" height="11.500" viewBox="0 0 15 11"><path d="M2.300 4.600L3.500 1.400Q3.700.8 4.400.8H10.600Q11.300.8 11.500 1.400L12.700 4.600" fill="none" stroke="#ccc" stroke-width="1.400"/><path fill="#ccc" fill-rule="evenodd" d="M1.500 3.900H13.500Q14.800 3.900 14.800 5.200V10.300Q14.800 11 14.100 11H12.300Q11.600 11 11.600 10.300V9.400H3.400V10.300Q3.400 11 2.700 11H.9Q.2 11 .2 10.300V5.200Q.2 3.900 1.500 3.900ZM1.800 5.600V7.200H4.200V5.600ZM10.800 5.600V7.200H13.200V5.600ZM5.200 5.900V6.900H9.800V5.900Z"/></svg><svg class="abs" style="left:44px;top:11px" width="14" height="15" viewBox="0 0 14 15"><path d="M0.500 3h13M4.800 3V1.700Q4.800.8 5.700.8H8.300Q9.200.8 9.200 1.700V3M2 3v10.500c0 .5.400 1 1 1h8c.6 0 1-.5 1-1V3M5.200 5.500v6.500M8.800 5.500v6.500" fill="none" stroke="#ccc" stroke-width="1.500"/></svg><svg class="abs" style="left:73px;top:10px" width="18" height="16" viewBox="0 0 18 16"><path d="M8 2.500H2c-.6 0-1 .4-1 1V14c0 .6.400 1 1 1h10.500c.6 0 1-.4 1-1V8.500" fill="none" stroke="#ccc" stroke-width="1.600"/><path d="M15.200.7l1.800 1.800c.3.300.3.800 0 1.100L9.500 11.100 6.300 11.900l.8-3.200L14.100.7c.3-.3.800-.3 1.100 0z" fill="none" stroke="#ccc" stroke-width="1.500"/></svg><svg class="abs" style="left:339px;top:10px" width="11" height="11" viewBox="0 0 11 11"><path d="M1 1l9 9M10 1l-9 9" stroke="#fff" stroke-width="1.800"/></svg><div class="send" style="left:38px;top:69px"></div><svg class="abs" style="left:47px;top:79px" width="17.500" height="17.500" viewBox="0 0 20 20"><path d="M18.500 1.500L1.500 9.500l5.500 2.200v5.300l3.200-3.700 4.300 3.200z" fill="none" stroke="#fff" stroke-width="2.300" stroke-linejoin="round"/><path d="M18.500 1.500L7 11.700" fill="none" stroke="#fff" stroke-width="2.300"/></svg><div class="sendlbl" style="left:16px;top:109px">詳細ヒアリン<br>グを送信</div><div class="lbl" style="left:14px;top:174px">氏名</div><svg class="abs" style="left:18px;top:195.500px" width="18.300" height="16" viewBox="0 0 17 15" preserveAspectRatio="none"><path d="M8.500 0.600c.6 0 1.100.3 1.400.8l6.800 11.400c.6 1-.1 2.200-1.400 2.200H1.700C.4 15-.3 13.800.3 12.800L7.100 1.400C7.400.9 7.900.6 8.500.6z" fill="#e8333a"/><path d="M8.500 4.800v4.700" stroke="#7a1218" stroke-width="1.700" stroke-linecap="round"/><circle cx="8.500" cy="12" r="1" fill="#7a1218"/></svg><div class="name" style="left:42px;top:194px">埼玉太郎</div><div class="lbl" style="left:14px;top:228px">世帯人数・ペット・支援情報</div><div class="val" style="left:14px;top:246px">世帯:3人 / ペット:いない / 支援:高齢・車椅子</div><div class="lbl" style="left:14px;top:293px">対応ステータス</div><div class="sbtn on" style="left:17px;top:318px;width:139px;height:44px"><span class="in"><svg width="17.500" height="15.800" viewBox="0 0 17 15"><path d="M8.500 0.600c.6 0 1.100.3 1.400.8l6.800 11.400c.6 1-.1 2.200-1.400 2.200H1.700C.4 15-.3 13.800.3 12.800L7.100 1.400C7.400.9 7.900.6 8.500.6z" fill="#e8333a"/><path d="M8.500 4.800v4.700" stroke="#8a1a20" stroke-width="1.700" stroke-linecap="round"/><circle cx="8.500" cy="12" r="1" fill="#8a1a20"/></svg>未対応</span></div><div class="sbtn" style="left:162px;top:318px;width:181px;height:44px"><span class="in"><svg width="15" height="15" viewBox="0 0 512 512"><path fill="#f0a030" d="M493.400 24.600l-104-24c-11.300-2.600-22.900 3.300-27.500 13.900l-48 112c-4.200 9.800-1.400 21.300 6.900 28l60.600 49.600c-36 76.700-98.900 140.500-177.200 177.200l-49.600-60.600c-6.800-8.300-18.200-11.100-28-6.900l-112 48C3.900 366.500-2 378.100.6 389.400l24 104C27.100 504.200 36.700 512 48 512c256.100 0 464-207.500 464-464 0-11.200-7.700-20.900-18.600-23.400z"/></svg>連絡・確認中</span></div><div class="sbtn" style="left:17px;top:364px;width:191px;height:43px"><span class="in"><svg width="20" height="15" viewBox="0 0 20 15"><path fill="#a044e8" d="M1.500 0h10c.8 0 1.500.7 1.500 1.500V3h2.600c.5 0 1 .2 1.300.6l2.500 2.900c.4.400.6.900.6 1.400V11c0 .6-.4 1-1 1h-.6a2.700 2.700 0 0 1-5.300 0H8.300A2.700 2.700 0 0 1 3 12h-1.500C.7 12 0 11.300 0 10.500v-9C0 .7.700 0 1.500 0zM13 4.500v3h5l-2.300-2.700c-.1-.2-.3-.3-.5-.3zM5.700 10.300a1.400 1.400 0 1 0 0 2.800 1.400 1.400 0 0 0 0-2.800zm10 0a1.400 1.400 0 1 0 0 2.800 1.400 1.400 0 0 0 0-2.800zM5.600 2.400v2H3.600v1.800h2v2h1.800v-2h2V4.400h-2v-2z" fill-rule="evenodd"/></svg>支援・対応中</span></div><div class="sbtn" style="left:214px;top:364px;width:129px;height:43px"><span class="in"><svg width="17" height="13" viewBox="0 0 16 13" preserveAspectRatio="none"><path d="M1.500 7l4.300 4.200L14.500 1.800" fill="none" stroke="#28c840" stroke-width="2.800"/></svg>完了</span></div><div class="lbl" style="left:14px;top:434px">緊急度</div><div class="sbtn" style="left:17px;top:459px;width:105px;height:43px"><span class="in"><span class="dot" style="background:radial-gradient(circle at 40% 35%,#f0506a,#e03a52)"></span><span style="font-weight:500">高</span></span></div><div class="sbtn on" style="left:127px;top:459px;width:105px;height:43px"><span class="in"><span class="dot" style="background:radial-gradient(circle at 40% 35%,#f8c24a,#eaa52a)"></span>中</span></div><div class="sbtn" style="left:238px;top:459px;width:105px;height:43px"><span class="in"><span class="dot" style="background:radial-gradient(circle at 40% 35%,#5fe09a,#3ccf80)"></span><span style="font-weight:500">低</span></span></div>
  </div>
</div>

<!-- ======= PANEL 2 : PROGRESS ======= -->
<div class="panel" id="p2" style="left:984px;width:455px">
  <div class="phead">
    <div class="ptitle">進捗管理</div>
    <div class="btn" style="left:297px;width:57px"><span style="position:absolute;left:8px;top:-1px;font-size:17px;font-weight:700">+</span><span style="position:absolute;left:24px">Add</span></div>
    <div class="vdiv" style="left:361px"></div>
    <svg class="abs" style="left:377px;top:19px" width="10" height="8" viewBox="0 0 10 8"><path d="M0 1.200h10M2 4h6M4 6.800h2" stroke="#eee" stroke-width="1.200"/></svg><svg class="abs" style="left:399px;top:14px" width="17" height="17" viewBox="0 0 17 17"><rect x="1" y="1" width="15" height="15" rx="1.500" fill="none" stroke="#fff" stroke-width="1.800"/><path d="M4 8.500l3 3 6-6.500" fill="none" stroke="#fff" stroke-width="1.800"/></svg><svg class="abs" style="left:427px;top:15px" width="12" height="12" viewBox="0 0 12 12"><path d="M2.500 9.500L9.500 2.500" stroke="#fff" stroke-width="2"/><path d="M7 0h5v5zM0 7v5h5z" fill="#fff"/></svg>
  </div>
  <div class="abs" style="left:0;top:45px;width:453px;height:43px;background:#111"></div>
  <div class="abs" style="left:0;top:87px;width:453px;height:83px;background:#2e3d4d;border-bottom:1px solid #4a4e52"></div>
  <svg class="abs" style="left:18px;top:63px" width="15" height="13" viewBox="0 0 17 15"><path d="M8.500 0.600c.6 0 1.100.3 1.400.8l6.800 11.400c.6 1-.1 2.200-1.400 2.200H1.700C.4 15-.3 13.800.3 12.800L7.100 1.400C7.400.9 7.900.6 8.500.6z" fill="#e8333a"/><path d="M8.500 4.800v4.700" stroke="#7a1218" stroke-width="1.700" stroke-linecap="round"/><circle cx="8.500" cy="12" r="1" fill="#7a1218"/></svg><div class="abs" style="left:39px;top:63px;font-size:11.500px;font-weight:500;line-height:16px;color:#fff">未対応</div><div class="abs" style="left:84px;top:64px;width:14px;height:15px;border-radius:3px;background:#8b9097;color:#e8e8e8;font-size:11px;line-height:15px;text-align:center">1</div><div class="abs" style="left:14px;top:98px;font-size:13px;font-weight:700;line-height:16px;color:#fff;white-space:nowrap">2026/04/02 10:12:08</div><svg class="abs" style="left:18px;top:117px" width="15" height="13" viewBox="0 0 17 15"><path d="M8.500 0.600c.6 0 1.100.3 1.400.8l6.800 11.400c.6 1-.1 2.200-1.400 2.200H1.700C.4 15-.3 13.800.3 12.800L7.100 1.400C7.400.9 7.900.6 8.500.6z" fill="#e8333a"/><path d="M8.500 4.800v4.700" stroke="#7a1218" stroke-width="1.700" stroke-linecap="round"/><circle cx="8.500" cy="12" r="1" fill="#7a1218"/></svg><div class="abs" style="left:39px;top:116px;font-size:11.500px;font-weight:500;line-height:16px;color:#e6c640;white-space:nowrap">埼玉太郎</div><svg class="abs" style="left:395px;top:143px" width="12" height="16" viewBox="0 0 12 16"><path d="M6 1C3.200 1 1 3.200 1 6c0 3.500 5 9 5 9s5-5.500 5-9c0-2.800-2.200-5-5-5z" fill="none" stroke="#cfd6dd" stroke-width="1.500"/></svg><svg class="abs" style="left:427px;top:143px" width="17" height="17" viewBox="0 0 20 20"><path d="M18.500 1.500L1.500 9.500l5.500 2.200v5.300l3.200-3.700 4.300 3.200z" fill="none" stroke="#cfd6dd" stroke-width="1.6" stroke-linejoin="round"/><path d="M18.500 1.500L7 11.700" fill="none" stroke="#cfd6dd" stroke-width="1.6"/></svg>
</div>

<!-- ======= PANEL 3 : DETAILS ======= -->
<div class="panel" id="p3" style="left:1448px;width:470px">
  <div class="phead">
    <div class="ptitle" style="left:15px">Details</div>
    <div class="abs" style="left:310px;top:7px;width:30px;height:30px;border:1px solid #3a3a3a;border-radius:4px;background:#1b1b1b"></div><svg class="abs" style="left:319px;top:14px" width="12" height="15" viewBox="0 0 12 15"><path d="M0 3h12M3.500 3V1h5v2M1.500 3v10c0 .6.400 1 1 1h7c.6 0 1-.4 1-1V3" fill="none" stroke="#fff" stroke-width="1.700"/><path d="M4.500 5.500v6M7.500 5.500v6" stroke="#fff" stroke-width="1.400"/></svg><div class="btn" style="left:346px;width:59px"><svg class="abs" style="left:8px;top:8px" width="16" height="14" viewBox="0 0 18 16"><path d="M8 2.500H2c-.6 0-1 .4-1 1V14c0 .6.400 1 1 1h10.500c.6 0 1-.4 1-1V8.500" fill="none" stroke="#fff" stroke-width="1.700"/><path d="M15.200.7l1.800 1.800c.3.300.3.800 0 1.100L9.500 11.100 6.300 11.900l.8-3.200L14.100.7c.3-.3.800-.3 1.100 0z" fill="none" stroke="#fff" stroke-width="1.600"/></svg><span style="position:absolute;left:29px;font-size:12.500px">Edit</span></div><div class="vdiv" style="left:413px"></div><svg class="abs" style="left:428px;top:15px" width="12" height="12" viewBox="0 0 12 12"><path d="M2.500 9.500L9.500 2.500" stroke="#fff" stroke-width="2"/><path d="M7 0h5v5zM0 7v5h5z" fill="#fff"/></svg>
  </div>
  <div class="abs" style="left:0;top:163px;width:470px;height:5px;background:#3d3f41"></div>
  <div class="send" style="left:38px;top:77px"></div><svg class="abs" style="left:47px;top:87px" width="17.500" height="17.500" viewBox="0 0 20 20"><path d="M18.500 1.500L1.500 9.500l5.500 2.200v5.300l3.200-3.700 4.300 3.200z" fill="none" stroke="#fff" stroke-width="2.300" stroke-linejoin="round"/><path d="M18.500 1.500L7 11.700" fill="none" stroke="#fff" stroke-width="2.300"/></svg><div class="sendlbl" style="left:16px;top:117px">詳細ヒアリン<br>グを送信</div><div class="lbl" style="left:14px;top:182px">氏名</div><svg class="abs" style="left:18px;top:203.500px" width="18.300" height="16" viewBox="0 0 17 15" preserveAspectRatio="none"><path d="M8.500 0.600c.6 0 1.100.3 1.400.8l6.800 11.400c.6 1-.1 2.200-1.400 2.200H1.700C.4 15-.3 13.800.3 12.800L7.100 1.400C7.400.9 7.900.6 8.500.6z" fill="#e8333a"/><path d="M8.500 4.800v4.700" stroke="#7a1218" stroke-width="1.700" stroke-linecap="round"/><circle cx="8.500" cy="12" r="1" fill="#7a1218"/></svg><div class="name" style="left:42px;top:202px">埼玉太郎</div><div class="lbl" style="left:14px;top:236px">世帯人数・ペット・支援情報</div><div class="val" style="left:14px;top:254px">世帯:3人 / ペット:いない / 支援:高齢・車椅子</div><div class="lbl" style="left:14px;top:301px">対応ステータス</div><div class="sbtn on" style="left:17px;top:326px;width:107px;height:44px"><span class="in"><svg width="17.500" height="15.800" viewBox="0 0 17 15"><path d="M8.500 0.600c.6 0 1.100.3 1.400.8l6.800 11.400c.6 1-.1 2.200-1.400 2.200H1.700C.4 15-.3 13.800.3 12.800L7.100 1.400C7.400.9 7.900.6 8.500.6z" fill="#e8333a"/><path d="M8.500 4.800v4.700" stroke="#8a1a20" stroke-width="1.700" stroke-linecap="round"/><circle cx="8.500" cy="12" r="1" fill="#8a1a20"/></svg>未対応</span></div><div class="sbtn" style="left:129px;top:326px;width:149px;height:44px"><span class="in"><svg width="15" height="15" viewBox="0 0 512 512"><path fill="#f0a030" d="M493.400 24.600l-104-24c-11.300-2.600-22.900 3.300-27.500 13.900l-48 112c-4.200 9.800-1.400 21.300 6.900 28l60.600 49.600c-36 76.700-98.900 140.500-177.200 177.200l-49.600-60.600c-6.800-8.300-18.200-11.100-28-6.900l-112 48C3.900 366.500-2 378.100.6 389.400l24 104C27.100 504.200 36.700 512 48 512c256.100 0 464-207.500 464-464 0-11.200-7.700-20.900-18.600-23.400z"/></svg>連絡・確認中</span></div><div class="sbtn" style="left:284px;top:326px;width:152px;height:44px"><span class="in"><svg width="20" height="15" viewBox="0 0 20 15"><path fill="#a044e8" d="M1.500 0h10c.8 0 1.500.7 1.500 1.500V3h2.600c.5 0 1 .2 1.300.6l2.500 2.900c.4.400.6.900.6 1.400V11c0 .6-.4 1-1 1h-.6a2.700 2.700 0 0 1-5.300 0H8.300A2.700 2.700 0 0 1 3 12h-1.500C.7 12 0 11.300 0 10.500v-9C0 .7.700 0 1.500 0zM13 4.500v3h5l-2.300-2.700c-.1-.2-.3-.3-.5-.3zM5.700 10.300a1.400 1.400 0 1 0 0 2.800 1.400 1.400 0 0 0 0-2.800zm10 0a1.400 1.400 0 1 0 0 2.800 1.400 1.400 0 0 0 0-2.800zM5.600 2.400v2H3.600v1.800h2v2h1.800v-2h2V4.400h-2v-2z" fill-rule="evenodd"/></svg>支援・対応中</span></div><div class="sbtn" style="left:17px;top:372px;width:419px;height:43px"><span class="in"><svg width="17" height="13" viewBox="0 0 16 13" preserveAspectRatio="none"><path d="M1.500 7l4.300 4.200L14.500 1.800" fill="none" stroke="#28c840" stroke-width="2.800"/></svg>完了</span></div><div class="lbl" style="left:14px;top:442px">緊急度</div><div class="sbtn" style="left:17px;top:467px;width:136px;height:43px"><span class="in"><span class="dot" style="background:radial-gradient(circle at 40% 35%,#f0506a,#e03a52)"></span><span style="font-weight:500">高</span></span></div><div class="sbtn on" style="left:159px;top:467px;width:136px;height:43px"><span class="in"><span class="dot" style="background:radial-gradient(circle at 40% 35%,#f8c24a,#eaa52a)"></span>中</span></div><div class="sbtn" style="left:300px;top:467px;width:136px;height:43px"><span class="in"><span class="dot" style="background:radial-gradient(circle at 40% 35%,#5fe09a,#3ccf80)"></span><span style="font-weight:500">低</span></span></div>
</div>

</body>
</html>
